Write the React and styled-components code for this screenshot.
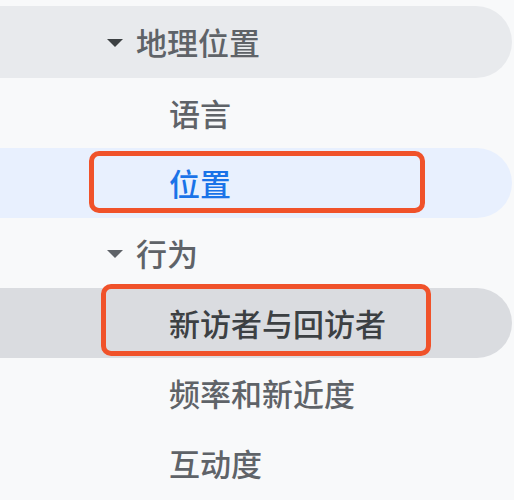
import styled, { createGlobalStyle } from "styled-components";

const GlobalStyle = createGlobalStyle`
    html, body {
        margin: 0;
        padding: 0;
        background: #f8f9fa;
    }
    body {
        font-family: "Noto Sans CJK SC", "Noto Sans", sans-serif;
    }
`

const Nav = styled.nav`
    display: flex;
    flex-direction: column;
    width: 512px;
    padding-top: 6px;
`

const Row = styled.div`
    position: relative;
    display: flex;
    align-items: center;
    height: ${(p) => p.$tall ? 72 : 70}px;
    padding-left: ${(p) => p.$child ? 169 : 107}px;
    border-radius: 0 36px 36px 0;
    background: ${(p) => p.$bg || "transparent"};
    color: ${(p) => p.$color || "#5f6368"};
    font-size: 31px;
    font-weight: 500;
    line-height: 1;
    box-sizing: border-box;
`

const Caret = styled.span`
    width: 0;
    height: 0;
    border-left: 8.5px solid transparent;
    border-right: 8.5px solid transparent;
    border-top: 8px solid ${(p) => p.$color};
    margin-right: 13px;
    margin-top: 1px;
`

const Label = styled.span`
    display: block;
    margin-top: -2px;
`

const Highlight = styled.div`
    position: absolute;
    left: ${(p) => p.$left}px;
    top: ${(p) => p.$top}px;
    width: ${(p) => p.$width}px;
    height: ${(p) => p.$height}px;
    border: 5px solid #f0522a;
    border-radius: 10px;
    box-sizing: border-box;
    pointer-events: none;
`

export default function App() {
    return (
        <>
            <GlobalStyle />
            <Nav>
                <Row $tall $bg="#e8eaed">
                    <Caret $color="#3c4043" />
                    <Label>地理位置</Label>
                </Row>
                <Row $child>
                    <Label>语言</Label>
                </Row>
                <Row $child $bg="#e8f0fe" $color="#1a73e8">
                    <Label>位置</Label>
                    <Highlight $left={89} $top={3} $width={336} $height={62} />
                </Row>
                <Row>
                    <Caret $color="#5f6368" />
                    <Label>行为</Label>
                </Row>
                <Row $child $bg="#dadce0" $color="#3c4043">
                    <Label>新访者与回访者</Label>
                    <Highlight $left={101} $top={-4} $width={330} $height={72} />
                </Row>
                <Row $child>
                    <Label>频率和新近度</Label>
                </Row>
                <Row $child>
                    <Label>互动度</Label>
                </Row>
            </Nav>
        </>
    )
}
